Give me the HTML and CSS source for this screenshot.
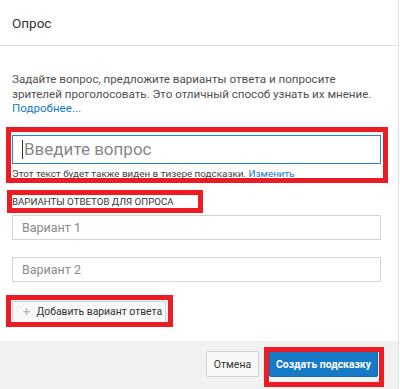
FILE: index.html
```html
<!DOCTYPE html>
<html lang="ru">
<head>
<meta charset="utf-8">
<link rel="stylesheet" href="styles.css">
</head>
<body>
<div class="dialog">
  <div class="header">Опрос</div>
  <div class="content">
    <p class="desc">Задайте вопрос, предложите варианты ответа и попросите зрителей проголосовать. Это отличный способ узнать их мнение. <a class="link">Подробнее...</a></p>
    <div class="question"><span class="caret"></span><span class="placeholder">Введите вопрос</span></div>
    <div class="hint">Этот текст будет также виден в тизере подсказки. <a class="link">Изменить</a></div>
    <div class="label">ВАРИАНТЫ ОТВЕТОВ ДЛЯ ОПРОСА</div>
    <div class="variant">Вариант 1</div>
    <div class="variant">Вариант 2</div>
    <div class="add"><span class="plus">+</span>Добавить вариант ответа</div>
  </div>
  <div class="footer">
    <div class="btn cancel">Отмена</div>
    <div class="btn primary">Создать подсказку</div>
  </div>
  <div class="mark mark-q"></div>
  <div class="mark mark-label"></div>
  <div class="mark mark-add"></div>
  <div class="mark mark-create"></div>
</div>
</body>
</html>
```
FILE: styles.css
```css
* { box-sizing: border-box; }
html, body { margin: 0; padding: 0; background: #fff; }
body { font-family: Roboto, "Noto Sans", Arial, sans-serif; color: #333; }
.dialog {
  position: relative;
  width: 399px;
  height: 389px;
  border-right: 1px solid #e2e2e2;
  display: flex;
  flex-direction: column;
  background: #fff;
}
.header {
  height: 46px;
  padding: 0 12px;
  display: flex;
  align-items: center;
  font-size: 13.5px;
  color: #333;
  border-bottom: 1px solid #e2e2e2;
}
.content {
  flex: 1;
  padding: 26px 17px 0 12px;
}
.desc {
  margin: 0;
  width: 365px;
  font-size: 11.6px;
  line-height: 14.5px;
  color: #505050;
}
.link { color: #167ac6; text-decoration: none; }
.question {
  margin-top: 19px;
  height: 29px;
  border: 1px solid #2a85d0;
  display: flex;
  align-items: center;
  padding-left: 9px;
}
.caret { width: 1px; height: 19px; background: #333; margin-right: 1px; }
.placeholder { font-size: 17px; color: #888; }
.hint {
  margin-top: 4px;
  font-size: 9.9px;
  line-height: 12px;
  color: #444;
  white-space: nowrap;
}
.label {
  margin-top: 16px;
  font-size: 9.7px;
  line-height: 12px;
  color: #333;
  white-space: nowrap;
}
.variant {
  margin-top: 7px;
  height: 25px;
  border: 1px solid #d3d3d3;
  display: flex;
  align-items: center;
  padding-left: 9px;
  font-size: 12.5px;
  color: #8a8a8a;
}
.variant + .variant { margin-top: 17px; }
.add {
  margin-top: 19px;
  width: 154px;
  height: 22px;
  border: 1px solid #d3d3d3;
  background: #f8f8f8;
  display: flex;
  align-items: center;
  padding-left: 10px;
  font-size: 10.4px;
  color: #333;
  white-space: nowrap;
}
.plus { color: #b5b5b5; font-size: 13px; margin-right: 6px; }
.footer {
  height: 48px;
  background: #f1f1f1;
  display: flex;
  justify-content: flex-end;
  align-items: center;
  gap: 10px;
  padding: 0 20px 2px 0;
}
.btn {
  height: 26px;
  display: flex;
  align-items: center;
  justify-content: center;
  font-size: 10.5px;
  border-radius: 2px;
  white-space: nowrap;
}
.cancel {
  width: 53px;
  background: #f8f8f8;
  border: 1px solid #d3d3d3;
  color: #333;
}
.primary {
  width: 109px;
  background: #167ac6;
  border: 1px solid #126db3;
  color: #fff;
  font-weight: bold;
  font-size: 10.4px;
}
.mark {
  position: absolute;
  border: 5px solid #ed1c24;
  pointer-events: none;
}
.mark-q { left: 6px; top: 127px; width: 382px; height: 56px; }
.mark-label { left: 7px; top: 190px; width: 196px; height: 23px; }
.mark-add { left: 6px; top: 295px; width: 167px; height: 32px; }
.mark-create { left: 264px; top: 347px; width: 120px; height: 40px; }
```
